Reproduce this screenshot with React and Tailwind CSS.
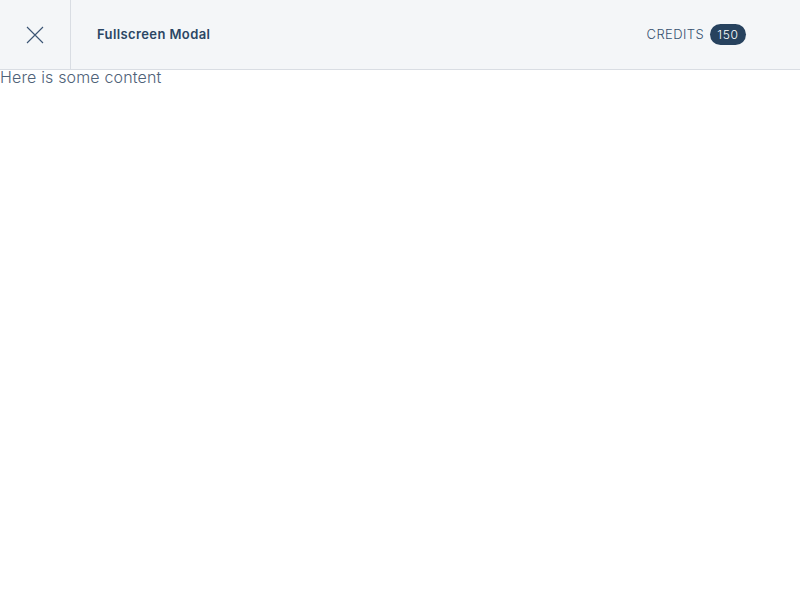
export default function App() {
  return (
    <div className="min-h-screen bg-white" style={{ fontFamily: "Inter, 'Noto Sans', sans-serif" }}>
      <header className="flex h-[70px] items-center border-b border-[#d9dde3] bg-[#f4f6f8]">
        <button className="flex h-full w-[71px] items-center justify-center border-r border-[#d9dde3] text-[#3b5574]">
          <svg width="18" height="18" viewBox="0 0 18 18" fill="none" stroke="currentColor" strokeWidth="1.1">
            <path d="M1 1 L17 17 M17 1 L1 17" />
          </svg>
        </button>
        <h1 className="ml-[26px] text-[13px] font-semibold tracking-[0.03em] text-[#2b4664]">Fullscreen Modal</h1>
        <div className="ml-auto mr-[54px] flex items-center gap-[6px]">
          <span className="text-[13px] font-light tracking-[0.03em] text-[#34506e]">CREDITS</span>
          <span className="flex h-[21px] w-[36px] items-center justify-center rounded-full bg-[#27425e] text-[12px] font-light tracking-[0.06em] text-white">150</span>
        </div>
      </header>
      <p className="text-[16px] font-light leading-[14px] tracking-[0.01em] text-[#4f6278]">Here is some content</p>
    </div>
  );
}
